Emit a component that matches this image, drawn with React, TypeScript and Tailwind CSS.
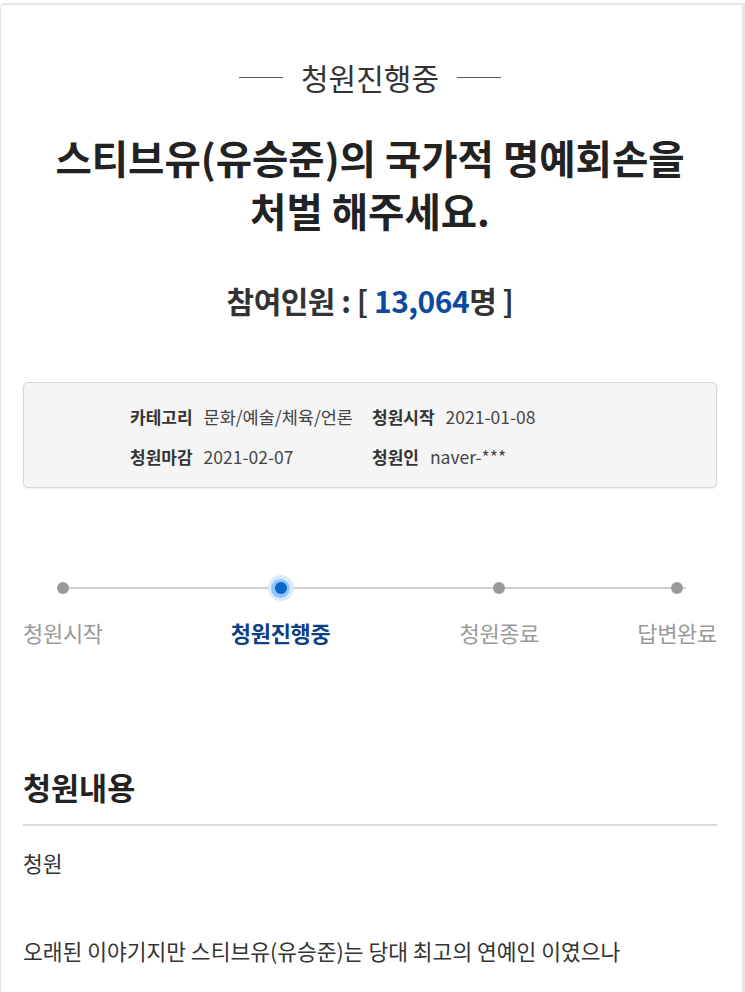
import React from "react";

const font = { fontFamily: '"Noto Sans CJK KR", "Noto Sans", sans-serif' };

function Dot({ active }: { active?: boolean }) {
  if (active) {
    return (
      <div className="flex h-[26px] w-[26px] items-center justify-center rounded-full bg-[#dbeafe]">
        <div className="flex h-[19px] w-[19px] items-center justify-center rounded-full bg-[#93c5fd]">
          <div className="h-[12px] w-[12px] rounded-full bg-[#0a66c8]" />
        </div>
      </div>
    );
  }
  return <div className="h-[12px] w-[12px] rounded-full bg-[#9a9a9a]" />;
}

export default function App() {
  return (
    <div className="min-h-[992px] bg-white pt-[3px]" style={font}>
      <div className="min-h-[989px] rounded-tl-[4px] border-l border-r-[3px] border-t-2 border-[#e6e6e6] pl-[22px] pr-[25px] pb-10 text-[#333]">
        {/* status title */}
        <div className="mt-[52px] flex h-[40px] items-center justify-center gap-[18px]">
          <div className="h-[1px] w-[44px] bg-[#555]" />
          <span className="text-[30px] leading-[40px] text-[#333]">청원진행중</span>
          <div className="h-[1px] w-[44px] bg-[#555]" />
        </div>

        {/* headline */}
        <h1 className="mt-[33px] text-center text-[39.5px] font-bold leading-[53px] text-[#222]">
          스티브유(유승준)의 국가적 명예회손을
          <br />
          처벌 해주세요.
        </h1>

        {/* count */}
        <div className="mt-[44px] text-center text-[30px] font-bold leading-[40px] tracking-[-0.5px] text-[#333]">
          참여인원 : [ <span className="text-[#0b4a9e]">13,064</span>명 ]
        </div>

        {/* info box */}
        <div className="mt-[62px] h-[106px] rounded-[5px] border border-[#d6d6d6] bg-[#f5f5f5] pt-[14px] pl-[106px] shadow-[0_1px_2px_rgba(0,0,0,0.08)]">
          <div className="grid grid-cols-[242px_auto] leading-[40px]">
            <div className="flex gap-[11px]">
              <span className="text-[17px] font-bold text-[#333]">카테고리</span>
              <span className="text-[17.5px] text-[#444]">문화/예술/체육/언론</span>
            </div>
            <div className="flex gap-[11px]">
              <span className="text-[17px] font-bold text-[#333]">청원시작</span>
              <span className="text-[17.5px] text-[#444]">2021-01-08</span>
            </div>
            <div className="flex gap-[11px]">
              <span className="text-[17px] font-bold text-[#333]">청원마감</span>
              <span className="text-[17.5px] text-[#444]">2021-02-07</span>
            </div>
            <div className="flex gap-[11px]">
              <span className="text-[17px] font-bold text-[#333]">청원인</span>
              <span className="text-[17.5px] text-[#444]">naver-***</span>
            </div>
          </div>
        </div>

        {/* progress */}
        <div className="relative mt-[87px] flex h-[26px] items-center">
          <div className="absolute left-[40px] right-[31px] top-[12px] h-[2px] bg-[#cfcfcf]" />
          <div className="relative z-10 flex w-[80px] justify-center">
            <Dot />
          </div>
          <div className="relative z-10 ml-[118px] flex w-[120px] justify-center">
            <Dot active />
          </div>
          <div className="relative z-10 ml-[119px] flex w-[80px] justify-center">
            <Dot />
          </div>
          <div className="relative z-10 ml-[98px] flex w-[80px] justify-center">
            <Dot />
          </div>
        </div>
        <div className="mt-[16px] flex text-[22px] leading-[30px] tracking-[-0.3px]">
          <div className="w-[80px] whitespace-nowrap text-center text-[#9a9a9a]">청원시작</div>
          <div className="ml-[118px] w-[120px] whitespace-nowrap text-center font-bold text-[#0d3f86]">청원진행중</div>
          <div className="ml-[119px] w-[80px] whitespace-nowrap text-center text-[#9a9a9a]">청원종료</div>
          <div className="ml-[98px] w-[80px] whitespace-nowrap text-center text-[#9a9a9a]">답변완료</div>
        </div>

        {/* content */}
        <h2 className="mt-[120px] text-[30.5px] font-bold leading-[40px] text-[#222]">청원내용</h2>
        <div className="mt-[17px] h-[2px] bg-[#d9d9d9]" />
        <div className="mt-[15px] text-[21.5px] leading-[44px] text-[#333]">
          <p>청원</p>
          <p>&nbsp;</p>
          <p>오래된 이야기지만 스티브유(유승준)는 당대 최고의 연예인 이였으나</p>
        </div>
      </div>
    </div>
  );
}
